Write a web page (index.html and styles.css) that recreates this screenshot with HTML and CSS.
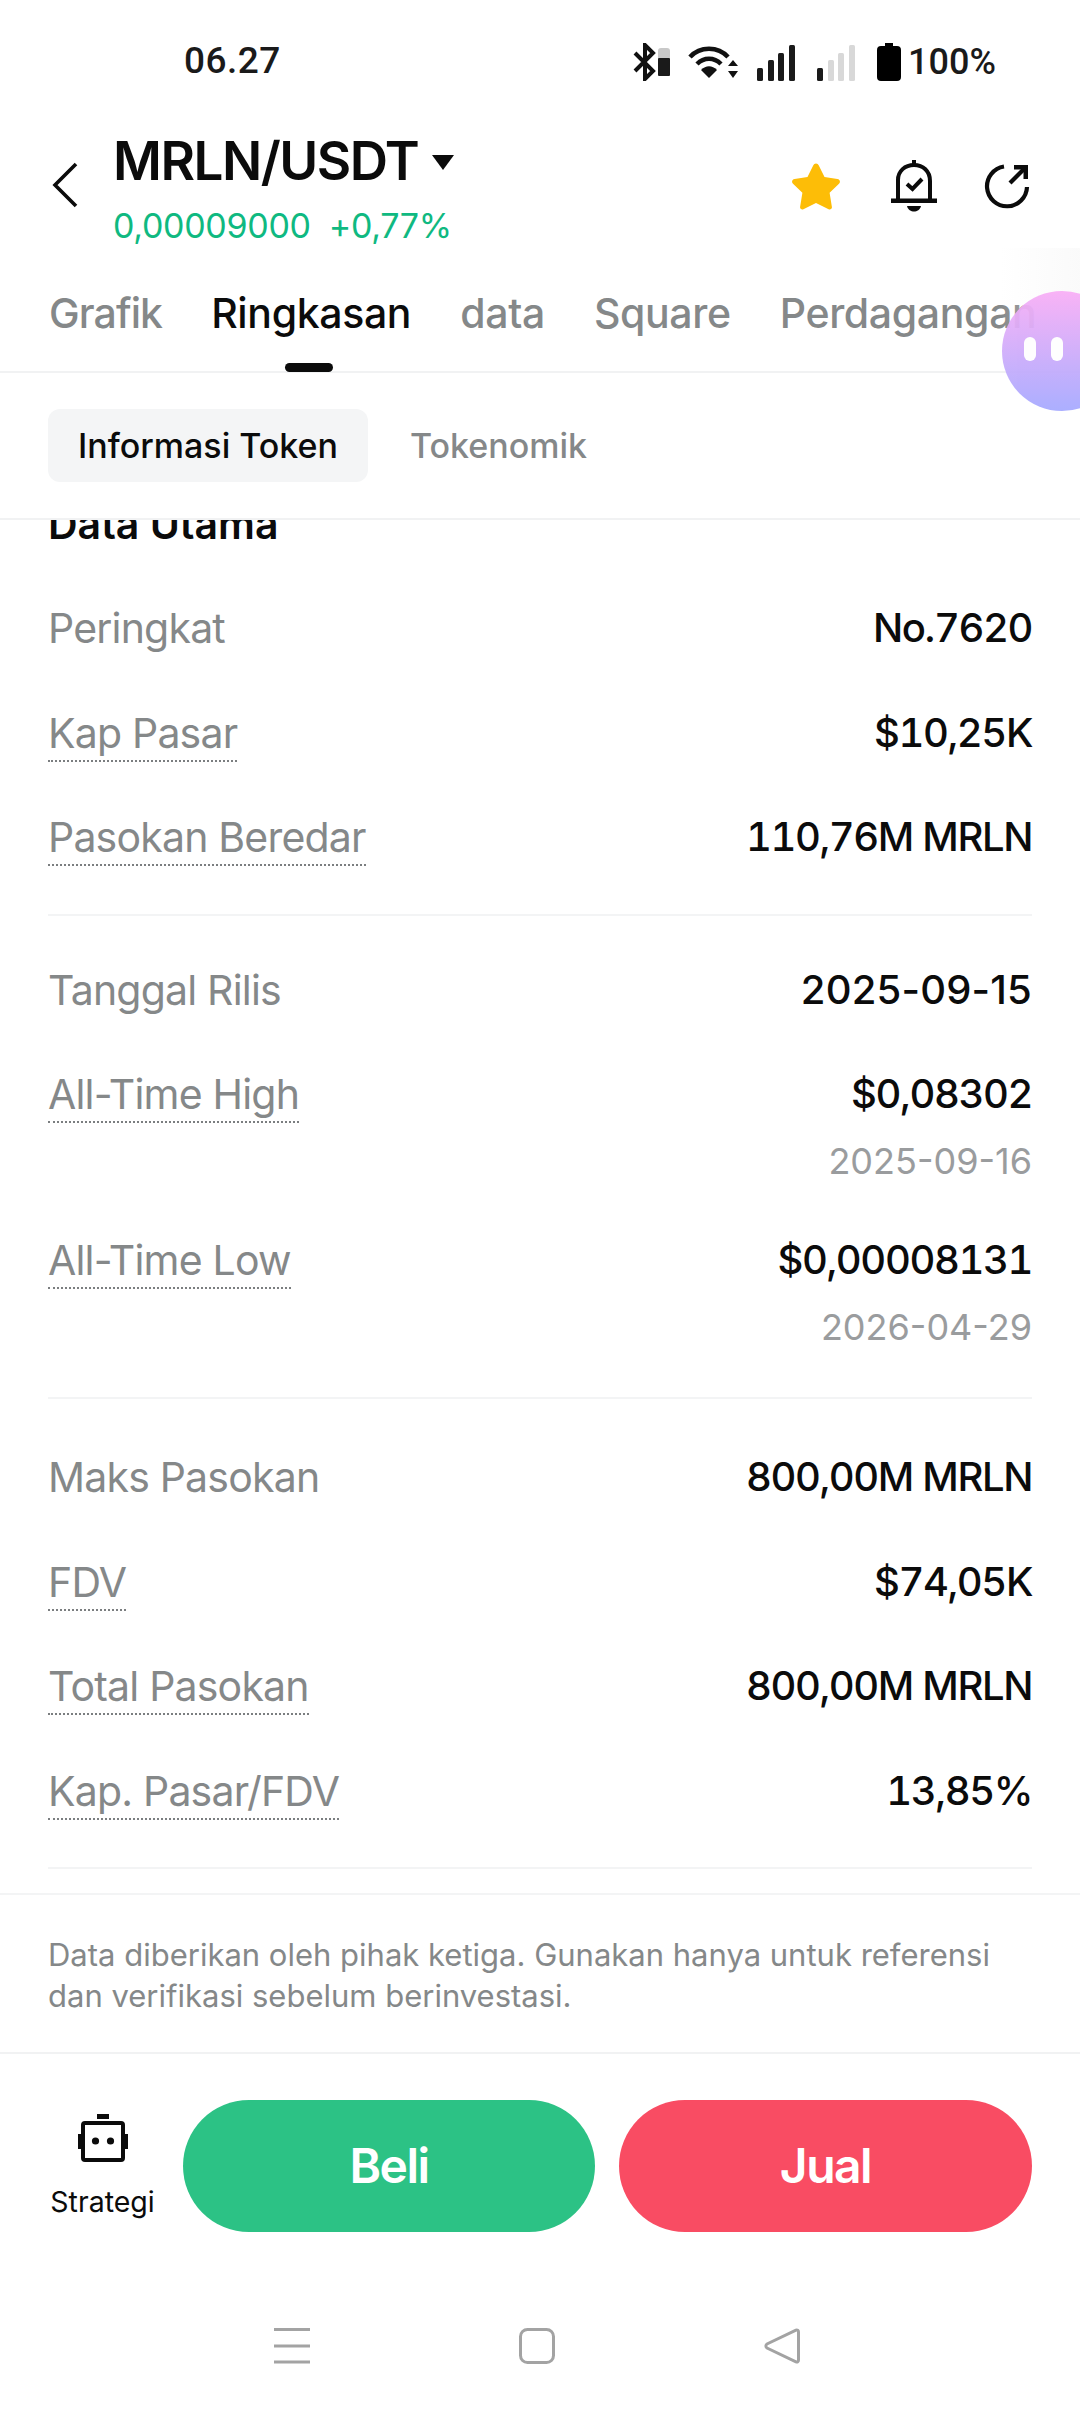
FILE: index.html
```html
<!DOCTYPE html>
<html lang="id">
<head>
<meta charset="utf-8">
<title>MRLN/USDT</title>
<link rel="stylesheet" href="styles.css">
</head>
<body>
<div class="screen">
  <div class="status">
    <span class="time">06.27</span>
    <div class="status-icons">
      <svg class="ic-bt" viewBox="0 0 38 38" width="38" height="38"><path d="M2 10l18 18-8 8V2l8 8L2 28" fill="none" stroke="#111" stroke-width="4"/><rect x="25" y="5" width="12" height="12" rx="3" fill="#c8c8c8"/><rect x="25" y="15" width="12" height="18" rx="1" fill="#1a1a1a"/></svg>
      <svg class="ic-wifi" viewBox="0 0 50 34" width="50" height="34"><g fill="none" stroke="#111" stroke-width="4.5"><path d="M2 12C12 1 30 1 40 12"/><path d="M9 19c7-7 17-7 24 0"/></g><path d="M13 25c5-5 11-5 16 0l-8 8z" fill="#111"/><path d="M45 15l5 6H40zM45 33l5-7H40z" fill="#111"/></svg>
      <svg class="ic-sig" viewBox="0 0 38 36" width="38" height="36"><g fill="#1a1a1a"><rect y="23" width="6" height="13" rx="1.5"/><rect x="11" y="15" width="6" height="21" rx="1.5"/><rect x="21" y="8" width="6" height="28" rx="1.5"/><rect x="32" width="6" height="36" rx="1.5"/></g></svg>
      <svg class="ic-sig" viewBox="0 0 38 36" width="38" height="36"><rect y="23" width="6" height="13" rx="1.5" fill="#1a1a1a"/><g fill="#d8d8d8"><rect x="11" y="15" width="6" height="21" rx="1.5"/><rect x="21" y="8" width="6" height="28" rx="1.5"/><rect x="32" width="6" height="36" rx="1.5"/></g></svg>
      <svg class="ic-bat" viewBox="0 0 24 38" width="24" height="38"><path d="M8 0h8v3h4a4 4 0 0 1 4 4v27a4 4 0 0 1-4 4H4a4 4 0 0 1-4-4V7a4 4 0 0 1 4-4h4z" fill="#000"/></svg>
      <span class="pct">100%</span>
    </div>
  </div>

  <header class="header">
    <svg class="back" viewBox="0 0 26 46" width="26" height="46"><path d="M24 2L3 23l21 21" fill="none" stroke="#0b0b0b" stroke-width="3.6"/></svg>
    <div class="pair">
      <div class="pair-title"><h1>MRLN/USDT</h1><svg class="caret" viewBox="0 0 22 15" width="22" height="15"><path d="M0 0h22L11 15z" fill="#0b0b0b"/></svg></div>
      <div class="pair-price"><span>0,00009000</span><span>+0,77%</span></div>
    </div>
    <div class="actions">
      <svg class="star" viewBox="0 0 50 48" width="50" height="48"><path d="M25 1.500c1.300 0 2.200.8 2.800 2l5.700 11.500 12.900 1.900c2.500.4 3.400 3.100 1.600 4.800l-9.400 9.100 2.300 14.100c.3 1.900-1.600 3.200-3.300 2.400L25 41l-12.600 6.300c-1.700.8-3.600-.5-3.300-2.400l2.300-14.100-9.400-9.100c-1.800-1.700-.9-4.400 1.600-4.800l12.900-1.900 5.700-11.500c.6-1.200 1.500-2 2.800-2z" fill="#fdbd07"/></svg>
      <svg viewBox="0 0 46 52" width="46" height="52"><path d="M21 0h4v5h-4z" fill="#0b0b0b"/><path d="M7 40V20C7 11 14 5 23 5s16 6 16 16v19" fill="none" stroke="#0b0b0b" stroke-width="4"/><path d="M0 38.500h46v4.500H0z" fill="#0b0b0b"/><path d="M16 46h14c-1 4-4 5.500-7 5.500s-6-1.500-7-5.500z" fill="#0b0b0b"/><path d="M16 24l5.500 5L31 19" fill="none" stroke="#0b0b0b" stroke-width="4"/></svg>
      <svg viewBox="0 0 46 46" width="46" height="46"><path d="M20 3.500A20 20 0 1 0 43 24" fill="none" stroke="#0b0b0b" stroke-width="4.200"/><path d="M26 20L42 4" fill="none" stroke="#0b0b0b" stroke-width="4.200"/><path d="M30 2h14v14h-4.500V6.500H30z" fill="#0b0b0b"/></svg>
    </div>
  </header>

  <nav class="tabs">
    <span class="tab">Grafik</span>
    <span class="tab tab-on">Ringkasan</span>
    <span class="tab">data</span>
    <span class="tab">Square</span>
    <span class="tab">Perdagangan</span>
    <div class="tabs-fade"></div>
    <div class="bubble"><i></i><i></i></div>
  </nav>

  <div class="subtabs">
    <span class="subtab subtab-on">Informasi Token</span>
    <span class="subtab">Tokenomik</span>
  </div>

  <main class="content">
    <div class="inner">
      <h2>Data Utama</h2>
      <section class="group group-first">
        <div class="row"><span class="k">Peringkat</span><span class="v">No.7620</span></div>
        <div class="row"><span class="k dot">Kap Pasar</span><span class="v">$10,25K</span></div>
        <div class="row"><span class="k dot">Pasokan Beredar</span><span class="v">110,76M MRLN</span></div>
      </section>
      <section class="group group-mid">
        <div class="row"><span class="k">Tanggal Rilis</span><span class="v v-date">2025-09-15</span></div>
        <div class="row row-sub"><span class="k dot">All-Time High</span><div class="vs"><span class="v">$0,08302</span><span class="d">2025-09-16</span></div></div>
        <div class="row row-sub"><span class="k dot">All-Time Low</span><div class="vs"><span class="v">$0,00008131</span><span class="d">2026-04-29</span></div></div>
      </section>
      <section class="group">
        <div class="row"><span class="k">Maks Pasokan</span><span class="v">800,00M MRLN</span></div>
        <div class="row"><span class="k dot">FDV</span><span class="v">$74,05K</span></div>
        <div class="row"><span class="k dot">Total Pasokan</span><span class="v">800,00M MRLN</span></div>
        <div class="row"><span class="k dot">Kap. Pasar/FDV</span><span class="v">13,85%</span></div>
      </section>
    </div>
    <p class="note">Data diberikan oleh pihak ketiga. Gunakan hanya untuk referensi dan verifikasi sebelum berinvestasi.</p>
  </main>

  <div class="trade">
    <div class="strategy">
      <svg viewBox="0 0 50 48" width="50" height="48"><rect x="19" y="0" width="12" height="5" fill="#0b0b0b"/><rect x="5" y="9" width="40" height="37" rx="2" fill="none" stroke="#0b0b0b" stroke-width="4"/><rect x="0" y="20" width="4" height="15" fill="#0b0b0b"/><rect x="46" y="20" width="4" height="15" fill="#0b0b0b"/><circle cx="17.500" cy="27" r="3.600" fill="#0b0b0b"/><circle cx="32.500" cy="27" r="3.600" fill="#0b0b0b"/></svg>
      <span>Strategi</span>
    </div>
    <div class="btn buy">Beli</div>
    <div class="btn sell">Jual</div>
  </div>

  <div class="navbar">
    <svg viewBox="0 0 36 36" width="36" height="36"><path d="M0 1.500h36M0 18h36M0 34h36" stroke="#a3a3a3" stroke-width="3"/></svg>
    <svg viewBox="0 0 36 36" width="36" height="36"><rect x="1.500" y="1.500" width="33" height="33" rx="7" fill="none" stroke="#a3a3a3" stroke-width="3"/></svg>
    <svg viewBox="0 0 36 36" width="36" height="36"><path d="M32 2.200L3 16c-1.500 1-1.500 3 0 4l29 13.800c1.300.6 2.500-.3 2.500-1.800V4c0-1.500-1.200-2.400-2.500-1.800z" fill="none" stroke="#a3a3a3" stroke-width="3"/></svg>
  </div>
</div>
</body>
</html>
```
FILE: styles.css
```css
* { box-sizing: border-box; }
html, body { margin: 0; padding: 0; background: #fff; }
body { font-family: Inter, "Noto Sans", sans-serif; color: #0b0b0b; }
.screen { width: 1080px; height: 2412px; display: flex; flex-direction: column; overflow: hidden; background: #fff; }

.status { height: 106px; flex: none; padding: 39px 85px 0 184px; display: flex; justify-content: space-between; align-items: flex-start; font-family: Roboto, sans-serif; font-weight: 500; color: #1a1a1a; }
.time { font-size: 37px; line-height: 44px; letter-spacing: .5px; }
.status-icons { display: flex; align-items: center; margin-top: 3px; margin-right: -1px; }
.ic-bt { margin-right: 17px; margin-left: 3px; }
.ic-wifi { margin-right: 19px; }
.ic-sig { margin-right: 22px; margin-top: 1px; }
.ic-bat { margin-right: 7px; }
.pct { font-size: 36px; line-height: 40px; }

.header { height: 142px; flex: none; padding: 0 50px 0 52px; display: flex; align-items: flex-start; position: relative; }
.back { margin-top: 56px; flex: none; }
.pair { margin-left: 35px; flex: 1; }
.pair-title { display: flex; align-items: center; height: 66px; margin-top: 22px; }
.pair-title h1 { margin: 0; font-size: 53px; font-weight: 600; line-height: 66px; letter-spacing: -1.500px; }
.caret { margin-left: 14px; margin-top: 2px; }
.pair-price { display: flex; gap: 18px; color: #0fb981; font-size: 34px; line-height: 44px; margin-top: 10px; letter-spacing: -.3px; }
.actions { display: flex; align-items: center; gap: 47px; margin-top: 54px; }
.star { margin-right: 3px; }

.tabs { height: 125px; flex: none; border-bottom: 2px solid #f1f2f3; display: flex; gap: 49px; padding: 40px 0 0 49px; position: relative; font-size: 41px; font-weight: 500; color: #858889; line-height: 50px; letter-spacing: -.35px; white-space: nowrap; }
.tab:first-child { letter-spacing: -.9px; }
.tab-on { color: #0b0b0b; position: relative; }
.tab-on::after { content: ""; position: absolute; left: 74px; bottom: -1px; width: 48px; height: 9px; border-radius: 5px; background: #0b0b0b; }
.tabs-fade { position: absolute; right: 0; top: 0; bottom: 0; width: 80px; background: linear-gradient(90deg, rgba(255,255,255,0), rgba(247,247,247,.6)); }
.bubble { position: absolute; left: 1002px; top: 43px; width: 120px; height: 120px; border-radius: 50%; background: linear-gradient(180deg, #f9aef6, #a5a9ff); opacity: .93; z-index: 2; }
.bubble i { position: absolute; top: 46px; width: 12px; height: 24px; border-radius: 6px; background: #fff; }
.bubble i:first-child { left: 22px; }
.bubble i:last-child { left: 49px; }

.subtabs { height: 147px; flex: none; border-bottom: 2px solid #f1f2f3; padding: 36px 0 0 48px; display: flex; gap: 42px; align-items: flex-start; }
.subtab { height: 73px; line-height: 73px; font-size: 34px; font-weight: 500; color: #858889; }
.subtab-on { width: 320px; padding-left: 30px; background: #f4f5f6; border-radius: 12px; color: #0b0b0b; white-space: nowrap; }

.content { flex: 1; min-height: 0; overflow: hidden; }
.inner { padding: 0 48px; margin-top: -21px; }
.inner h2 { margin: 0; height: 40px; line-height: 50px; font-size: 41px; font-weight: 600; }
.group { border-bottom: 2px solid #f3f4f5; padding-bottom: 24px; margin-bottom: 24px; }
.group:last-child { margin-bottom: 0; }
.group-first { padding-top: 37px; }
.group-mid { margin-top: -2px; margin-bottom: 26px; }
.row { min-height: 104.500px; display: flex; justify-content: space-between; align-items: flex-start; padding-top: 27px; line-height: 50px; font-size: 41px; }
.row-sub { min-height: 166px; }
.row-sub:last-child { min-height: 165px; }
.k { color: #858889; letter-spacing: -.8px; font-weight: 400; }
.dot { border-bottom: 2px dotted #7b7e80; line-height: 54px; height: 56px; margin-top: -2px; }
.v { font-size: 40px; font-weight: 500; color: #0b0b0b; letter-spacing: -1.400px; font-feature-settings: "tnum"; }
.v-date { font-feature-settings: normal; letter-spacing: .2px; }
.vs { display: flex; flex-direction: column; align-items: flex-end; }
.d { font-size: 36px; color: #9a9c9e; line-height: 44px; margin-top: 20px; }
.note { margin: 0; padding: 39px 48px 0; border-top: 2px solid #f3f4f5; margin-top: 24px; font-size: 31px; line-height: 41px; color: #858889; }

.trade { flex: none; height: 224px; border-top: 2px solid #f1f2f3; padding: 46px 48px 0 0; display: flex; align-items: flex-start; }
.strategy { width: 183px; flex: none; display: flex; flex-direction: column; align-items: center; padding: 14px 0 0 22px; font-size: 28.500px; line-height: 36px; }
.strategy span { margin-top: 22px; }
.btn { height: 132px; line-height: 132px; border-radius: 66px; text-align: center; color: #fff; font-size: 48px; font-weight: 600; letter-spacing: -1.500px; }
.buy { width: 412px; background: #2cc285; margin-right: 24px; }
.sell { width: 413px; background: #f94c63; }

.navbar { flex: none; height: 136px; display: flex; justify-content: center; gap: 209px; padding: 52px 7px 0 0; }
```
